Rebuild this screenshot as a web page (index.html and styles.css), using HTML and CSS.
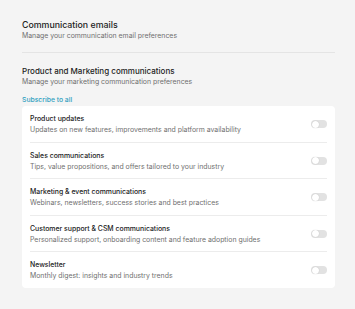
FILE: index.html
```html
<!DOCTYPE html>
<html lang="en">
<head>
    <meta charset="UTF-8">
    <meta name="viewport" content="width=device-width, initial-scale=1.0">
    <title>Communication emails</title>
    <link rel="stylesheet" href="styles.css">
</head>
<body>
    <div class="page">
        <div class="header">
            <h1>Communication emails</h1>
            <p class="sub">Manage your communication email preferences</p>
        </div>

        <div class="section">
            <h2>Product and Marketing communications</h2>
            <p class="sub">Manage your marketing communication preferences</p>
            <a class="subscribe" href="#">Subscribe to all</a>

            <div class="card">
                <div class="row">
                    <div class="text">
                        <div class="name">Product updates</div>
                        <div class="desc">Updates on new features, improvements and platform availability</div>
                    </div>
                    <span class="toggle"></span>
                </div>
                <div class="row">
                    <div class="text">
                        <div class="name">Sales communications</div>
                        <div class="desc">Tips, value propositions, and offers tailored to your industry</div>
                    </div>
                    <span class="toggle"></span>
                </div>
                <div class="row">
                    <div class="text">
                        <div class="name">Marketing &amp; event communications</div>
                        <div class="desc">Webinars, newsletters, success stories and best practices</div>
                    </div>
                    <span class="toggle"></span>
                </div>
                <div class="row">
                    <div class="text">
                        <div class="name">Customer support &amp; CSM communications</div>
                        <div class="desc">Personalized support, onboarding content and feature adoption guides</div>
                    </div>
                    <span class="toggle"></span>
                </div>
                <div class="row">
                    <div class="text">
                        <div class="name">Newsletter</div>
                        <div class="desc">Monthly digest: insights and industry trends</div>
                    </div>
                    <span class="toggle"></span>
                </div>
            </div>
        </div>
    </div>
</body>
</html>
```

FILE: styles.css
```css
body {
    margin: 0;
    background-color: #f4f4f4;
    font-family: Inter, "Noto Sans", sans-serif;
    color: #222;
}
.page {
    padding: 19px 20px 0 22px;
}
h1, h2 {
    margin: 0;
    font-weight: 500;
}
h1 {
    font-size: 8.8px;
    line-height: 12px;
}
h2 {
    font-size: 8px;
    line-height: 12px;
}
.sub {
    margin: 0;
    font-size: 6.9px;
    line-height: 10px;
    color: #6f6f6f;
}
.header {
    padding-bottom: 11px;
    border-bottom: 1px solid #e4e4e4;
}
.section {
    padding-top: 12px;
}
.subscribe {
    display: block;
    margin-top: 7.5px;
    font-size: 6.8px;
    line-height: 10px;
    color: #2e9fc0;
    text-decoration: none;
    font-weight: 500;
}
.card {
    margin-top: 1.5px;
    background-color: #fff;
    border-radius: 4px;
    padding: 0 8px;
}
.row {
    display: flex;
    align-items: center;
    justify-content: space-between;
    padding: 7px 0 6.5px;
    border-bottom: 1px solid #ececec;
}
.row:last-child {
    border-bottom: none;
}
.name {
    font-size: 6.9px;
    line-height: 11px;
    font-weight: 500;
}
.desc {
    font-size: 6.9px;
    line-height: 11px;
    color: #6f6f6f;
}
.toggle {
    position: relative;
    width: 16px;
    height: 8px;
    border-radius: 4px;
    background-color: #e2e2e2;
    flex-shrink: 0;
}
.toggle::after {
    content: "";
    position: absolute;
    left: 0.5px;
    top: 0.5px;
    width: 7px;
    height: 7px;
    border-radius: 50%;
    background-color: #fff;
    box-shadow: 0 0 1px rgba(0, 0, 0, 0.25);
}
```
